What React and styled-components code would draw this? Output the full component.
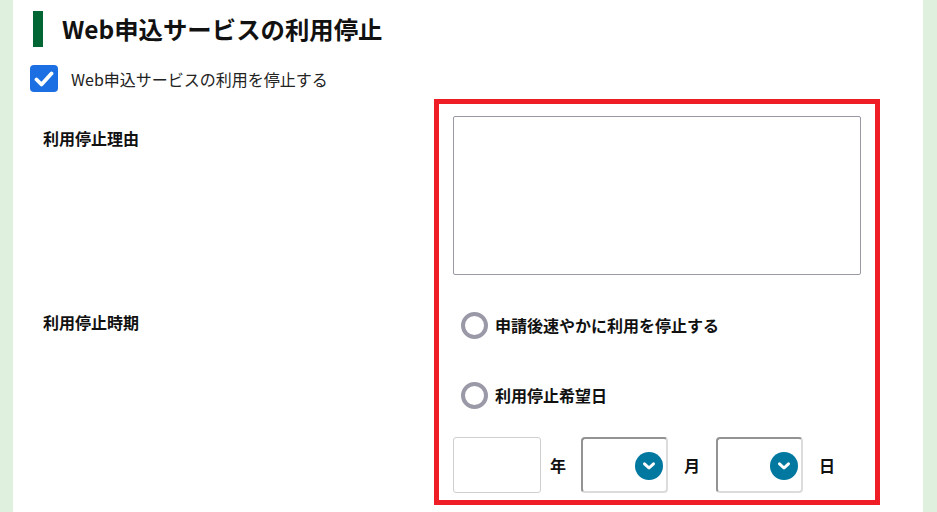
import styled, { createGlobalStyle } from "styled-components";

const Global = createGlobalStyle`
  html, body {
    margin: 0;
    padding: 0;
    background: #e0f0df;
  }
  body {
    font-family: "Noto Sans CJK JP", "Noto Sans", sans-serif;
    color: #111;
  }
`;

const Page = styled.div`
  display: flex;
  height: 512px;
  padding: 0 14px 0 13px;
  box-sizing: border-box;
  background: #e0f0df;
`;

const Panel = styled.div`
  flex: 1;
  background: #fff;
  padding: 11px 0 0 17px;
  overflow: hidden;
`;

const Heading = styled.h2`
  display: flex;
  align-items: center;
  gap: 19px;
  margin: 0 0 0 3px;
  height: 36px;
  font-size: 24.4px;
  font-weight: 700;
  line-height: 36px;
  &::before {
    content: "";
    width: 10px;
    height: 36px;
    background: #006633;
  }
`;

const CheckRow = styled.label`
  display: flex;
  align-items: center;
  gap: 13px;
  margin-top: 18px;
  font-size: 16px;
  color: #222;
`;

const CheckBox = styled.span`
  display: flex;
  align-items: center;
  justify-content: center;
  width: 28px;
  height: 27px;
  border-radius: 4px;
  background: #1b6fe2;
`;

const Form = styled.div`
  display: flex;
  margin-top: 7px;
`;

const LabelColumn = styled.div`
  width: 391px;
  padding-left: 13px;
  padding-top: 27px;
  display: flex;
  flex-direction: column;
  gap: 160px;
`;

const FieldLabel = styled.div`
  font-size: 16px;
  font-weight: 700;
  line-height: 24px;
`;

const RedBox = styled.div`
  width: 446px;
  box-sizing: border-box;
  border: 5px solid #ee1d26;
  padding: 12px 14px 7px;
`;

const TextArea = styled.textarea`
  display: block;
  width: 408px;
  height: 159px;
  box-sizing: border-box;
  border: 1px solid #9a99a6;
  border-radius: 2px;
  resize: none;
  font-family: inherit;
`;

const RadioRow = styled.label`
  display: flex;
  align-items: center;
  gap: 7px;
  padding-left: 8px;
  margin-top: ${(p) => p.$top}px;
  font-size: 16px;
  font-weight: 700;
  line-height: 28px;
`;

const RadioRing = styled.span`
  width: 27px;
  height: 27px;
  box-sizing: border-box;
  border-radius: 50%;
  border: 4px solid #9a99a7;
`;

const DateRow = styled.div`
  display: flex;
  align-items: center;
  margin-top: 28px;
`;

const YearInput = styled.input`
  width: 88px;
  height: 56px;
  box-sizing: border-box;
  border: 1px solid #cfcfcf;
  border-radius: 3px;
`;

const Unit = styled.span`
  font-size: 16px;
  font-weight: 700;
  margin: 0 ${(p) => p.$right}px 0 ${(p) => p.$left}px;
`;

const Select = styled.div`
  position: relative;
  width: 87px;
  height: 56px;
  box-sizing: border-box;
  border: 2px solid;
  border-color: #939393 #dcdcdc #dcdcdc #939393;
  border-radius: 4px;
`;

const SelectKnob = styled.span`
  position: absolute;
  right: 3px;
  top: 13px;
  width: 28px;
  height: 28px;
  border-radius: 50%;
  background: #00789f;
  display: flex;
  align-items: center;
  justify-content: center;
`;

function Chevron() {
  return (
    <svg width="14" height="10" viewBox="0 0 14 10">
      <path d="M2.5 2.8l4.5 4.2 4.5-4.2" fill="none" stroke="#fff" strokeWidth="3" strokeLinecap="round" strokeLinejoin="round" />
    </svg>
  );
}

function App() {
  return (
    <>
      <Global />
      <Page>
        <Panel>
          <Heading>Web申込サービスの利用停止</Heading>
          <CheckRow>
            <CheckBox>
              <svg width="20" height="16" viewBox="0 0 20 16">
                <path d="M2.5 8.5l5 5 10-11" fill="none" stroke="#fff" strokeWidth="3.8" strokeLinecap="round" strokeLinejoin="round" />
              </svg>
            </CheckBox>
            Web申込サービスの利用を停止する
          </CheckRow>
          <Form>
            <LabelColumn>
              <FieldLabel>利用停止理由</FieldLabel>
              <FieldLabel>利用停止時期</FieldLabel>
            </LabelColumn>
            <RedBox>
              <TextArea />
              <RadioRow $top={36}>
                <RadioRing />
                申請後速やかに利用を停止する
              </RadioRow>
              <RadioRow $top={42}>
                <RadioRing />
                利用停止希望日
              </RadioRow>
              <DateRow>
                <YearInput />
                <Unit $left={9} $right={15}>年</Unit>
                <Select>
                  <SelectKnob><Chevron /></SelectKnob>
                </Select>
                <Unit $left={16} $right={16}>月</Unit>
                <Select>
                  <SelectKnob><Chevron /></SelectKnob>
                </Select>
                <Unit $left={16} $right={0}>日</Unit>
              </DateRow>
            </RedBox>
          </Form>
        </Panel>
      </Page>
    </>
  );
}

export default App;
